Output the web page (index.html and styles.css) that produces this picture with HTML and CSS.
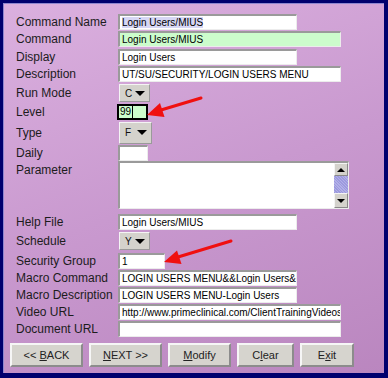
FILE: index.html
```html
<!DOCTYPE html>
<html>
<head>
    <title>Command Setup</title>
    <link rel="stylesheet" href="styles.css">
</head>
<body>
    <div class="window">
        <div class="form">
            <div class="row">
                <span class="label">Command Name</span>
                <div class="field short"><span class="selected">Login Users/MIUS</span></div>
            </div>
            <div class="row h18">
                <span class="label">Command</span>
                <div class="field long green">Login Users/MIUS</div>
            </div>
            <div class="row">
                <span class="label">Display</span>
                <div class="field short">Login Users</div>
            </div>
            <div class="row h18">
                <span class="label">Description</span>
                <div class="field long">UT/SU/SECURITY/LOGIN USERS MENU</div>
            </div>
            <div class="row h20">
                <span class="label">Run Mode</span>
                <div class="select">C<span class="caret"></span></div>
            </div>
            <div class="row">
                <span class="label">Level</span>
                <div class="field level">99<span class="cursor"></span></div>
            </div>
            <div class="row h25">
                <span class="label">Type</span>
                <div class="select tall">F<span class="caret"></span></div>
            </div>
            <div class="row h16">
                <span class="label">Daily</span>
                <div class="field tiny"></div>
            </div>
            <div class="row h52 top">
                <span class="label">Parameter</span>
                <div class="memo">
                    <div class="memo-text"></div>
                    <div class="scrollbar">
                        <div class="scroll-btn"><span class="tri-up"></span></div>
                        <div class="thumb"></div>
                        <div class="scroll-btn down"><span class="caret"></span></div>
                    </div>
                </div>
            </div>
            <div class="row">
                <span class="label">Help File</span>
                <div class="field short">Login Users/MIUS</div>
            </div>
            <div class="row h22">
                <span class="label">Schedule</span>
                <div class="select">Y<span class="caret"></span></div>
            </div>
            <div class="row">
                <span class="label">Security Group</span>
                <div class="field group">1</div>
            </div>
            <div class="row">
                <span class="label">Macro Command</span>
                <div class="field short">LOGIN USERS MENU&amp;&amp;Login Users&amp;&amp;LOGIN</div>
            </div>
            <div class="row">
                <span class="label">Macro Description</span>
                <div class="field short">LOGIN USERS MENU-Login Users</div>
            </div>
            <div class="row">
                <span class="label">Video URL</span>
                <div class="field long">http://www.primeclinical.com/ClientTrainingVideos</div>
            </div>
            <div class="row">
                <span class="label">Document URL</span>
                <div class="field long"></div>
            </div>
        </div>

        <div class="buttons">
            <button class="btn w73">&lt;&lt; <u>B</u>ACK</button>
            <button class="btn w73"><u>N</u>EXT &gt;&gt;</button>
            <button class="btn w63"><u>M</u>odify</button>
            <button class="btn w57">C<u>l</u>ear</button>
            <button class="btn w54">E<u>x</u>it</button>
        </div>

        <!-- red callout arrows drawn over the form -->
        <svg class="arrows" width="388" height="378" viewBox="0 0 388 378">
            <line x1="201" y1="98" x2="161" y2="110" stroke="#f01010" stroke-width="3" stroke-linecap="round"/>
            <polygon points="147,115 164.5,117 160,103" fill="#f01010"/>
            <line x1="231" y1="241" x2="178" y2="257" stroke="#f01010" stroke-width="3" stroke-linecap="round"/>
            <polygon points="164,262 181.5,264 177,250.5" fill="#f01010"/>
        </svg>
    </div>
</body>
</html>
```

FILE: styles.css
```css
body {
    margin: 0;
}
.window {
    position: relative;
    width: 388px;
    height: 378px;
    box-sizing: border-box;
    border-style: solid;
    border-color: #00006e;
    border-width: 3px 4px 5px 3px;
    box-shadow: inset 1px 1px 0 #8e86d0;
    background: linear-gradient(160deg, #dbb0df 0%, #c999cf 50%, #ba86bf 100%);
    padding: 10px 0 0 13px;
    font-family: "Liberation Sans", Arial, sans-serif;
}
.row {
    display: flex;
    align-items: center;
    height: 17px;
}
.row.h16 { height: 16px; }
.row.h18 { height: 18px; }
.row.h20 { height: 20px; }
.row.h22 { height: 22px; }
.row.h25 { height: 25px; }
.row.h52 { height: 52px; }
.row.top {
    align-items: flex-start;
}
.label {
    width: 102px;
    flex: none;
    font-size: 12px;
    color: #1c1c1c;
}
.row.top .label {
    margin-top: 2px;
}
.field {
    height: 16px;
    box-sizing: border-box;
    background: #fff;
    border-style: solid;
    border-width: 2px 1px 1px 2px;
    border-color: #9a9a9a #ececec #ececec #9a9a9a;
    font-size: 10px;
    line-height: 13px;
    padding: 0 2px;
    color: #000;
    white-space: nowrap;
    overflow: hidden;
}
.field.short { width: 179px; }
.field.long { width: 223px; }
.field.tiny { width: 30px; }
.field.group { width: 47px; }
.field.green {
    background: #ccfccc;
}
.selected {
    background: #d6d6f4;
}
.field.level {
    width: 31px;
    margin-left: -1px;
    background: #ccfccc;
    border: 2px solid #000;
    padding: 0 1px;
    line-height: 12px;
}
.cursor {
    display: inline-block;
    width: 1px;
    height: 12px;
    background: #000;
    vertical-align: top;
    margin-left: 1px;
}
.select {
    width: 31px;
    height: 18px;
    box-sizing: border-box;
    margin-left: 1px;
    background: #d4d2cc;
    border: 1px solid;
    border-color: #f4f4f4 #9a9a9a #9a9a9a #f4f4f4;
    display: flex;
    align-items: center;
    justify-content: space-between;
    padding: 0 4px 0 5px;
    font-size: 10px;
    color: #111;
}
.select.tall {
    height: 22px;
    width: 33px;
}
.caret {
    width: 0;
    height: 0;
    border-left: 5px solid transparent;
    border-right: 5px solid transparent;
    border-top: 5px solid #000;
}
.tri-up {
    width: 0;
    height: 0;
    border-left: 4px solid transparent;
    border-right: 4px solid transparent;
    border-bottom: 4px solid #000;
}
.memo {
    display: flex;
    width: 231px;
    height: 48px;
    box-sizing: border-box;
    border-style: solid;
    border-width: 2px 1px 1px 2px;
    border-color: #9a9a9a #ececec #ececec #9a9a9a;
    background: #fff;
}
.memo-text {
    flex: 1;
}
.scrollbar {
    width: 14px;
    display: flex;
    flex-direction: column;
    background: #d4d2cc;
}
.scroll-btn {
    height: 13px;
    box-sizing: border-box;
    border: 1px solid;
    border-color: #f4f4f4 #8a8a8a #8a8a8a #f4f4f4;
    background: #d4d2cc;
    display: flex;
    align-items: center;
    justify-content: center;
}
.scroll-btn.down {
    height: 15px;
}
.scroll-btn.down .caret {
    border-left-width: 4px;
    border-right-width: 4px;
    border-top-width: 4px;
}
.thumb {
    flex: 1;
    background: repeating-linear-gradient(45deg, #9c9ade 0 1px, #b2b0e8 1px 2px);
}
.buttons {
    display: flex;
    gap: 6px;
    margin: 6px 0 0 -6px;
}
.btn {
    height: 24px;
    box-sizing: border-box;
    background: #d6d4ce;
    border: 2px solid;
    border-color: #f6f6f6 #8c8c8c #8c8c8c #f6f6f6;
    font-family: "Liberation Sans", Arial, sans-serif;
    font-size: 11px;
    color: #222;
    padding: 0;
}
.w73 { width: 73px; }
.w63 { width: 63px; }
.w57 { width: 57px; }
.w54 { width: 54px; }
.arrows {
    position: absolute;
    left: -3px;
    top: -3px;
    pointer-events: none;
}
```
